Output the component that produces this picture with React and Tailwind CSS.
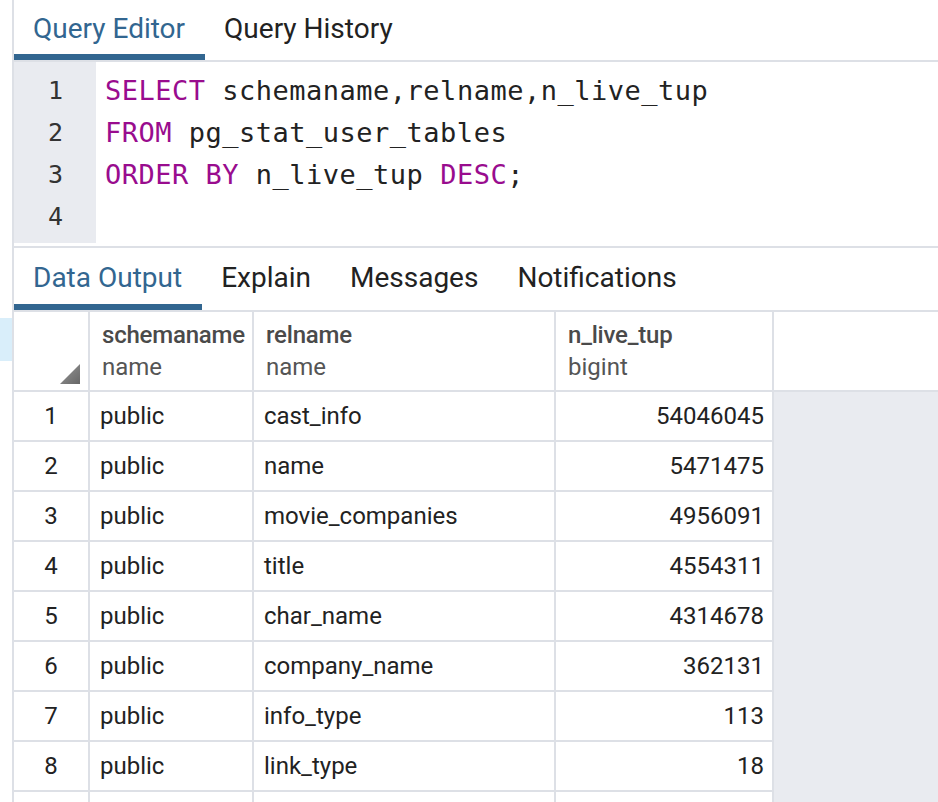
import React from 'react';

const rows = [
  ['public', 'cast_info', '54046045'],
  ['public', 'name', '5471475'],
  ['public', 'movie_companies', '4956091'],
  ['public', 'title', '4554311'],
  ['public', 'char_name', '4314678'],
  ['public', 'company_name', '362131'],
  ['public', 'info_type', '113'],
  ['public', 'link_type', '18'],
  ['', '', ''],
];

const codeLines = [
  [['k', 'SELECT'], ['t', ' schemaname,relname,n_live_tup']],
  [['k', 'FROM'], ['t', ' pg_stat_user_tables']],
  [['k', 'ORDER BY'], ['t', ' n_live_tup '], ['k', 'DESC'], ['t', ';']],
  [],
];

function Tab({ label, active }) {
  return (
    <div className="flex flex-col h-full">
      <div
        className={`flex-1 flex items-center pl-[19px] pr-[20px] pt-[4px] ${
          active ? 'text-[#326690]' : 'text-[#222]'
        }`}
      >
        {label}
      </div>
      <div className={`h-[6px] ${active ? 'bg-[#326690]' : ''}`} />
    </div>
  );
}

function App() {
  return (
    <div
      className="w-[938px] h-[802px] overflow-hidden bg-white flex"
      style={{ fontFamily: 'Roboto, "Noto Sans", sans-serif' }}
    >
      <div className="w-[12px] shrink-0">
        <div className="mt-[318px] h-[43px] bg-[#d9eefa]" />
      </div>

      <div className="flex-1 flex flex-col border-l-2 border-[#dde0e6] min-w-0">
        {/* query tabs */}
        <div className="h-[62px] shrink-0 flex border-b-2 border-[#dde0e6] text-[28px]">
          <Tab label="Query Editor" active />
          <Tab label="Query History" />
        </div>

        {/* editor */}
        <div className="h-[186px] shrink-0 flex border-b-2 border-[#dde0e6]">
          <div className="w-[82px] h-[181px] bg-[#e9ebf0] pt-[8px] pr-[33px] text-right text-[#333] text-[25px] font-['DejaVu_Sans_Mono',monospace]">
            {codeLines.map((_, i) => (
              <div key={i} className="h-[42px] leading-[42px]">
                {i + 1}
              </div>
            ))}
          </div>
          <div className="pl-[9px] pt-[8px] text-[27px] tracking-[0.5px] text-[#222] font-['DejaVu_Sans_Mono',monospace] whitespace-pre">
            {codeLines.map((line, i) => (
              <div key={i} className="h-[42px] leading-[42px]">
                {line.map(([kind, text], j) => (
                  <span key={j} className={kind === 'k' ? 'text-[#990c8e]' : ''}>
                    {text}
                  </span>
                ))}
              </div>
            ))}
          </div>
        </div>

        {/* output tabs */}
        <div className="h-[64px] shrink-0 flex border-b-2 border-[#dde0e6] text-[28px]">
          <Tab label="Data Output" active />
          <Tab label="Explain" />
          <Tab label="Messages" />
          <Tab label="Notifications" />
        </div>

        {/* result grid */}
        <div className="flex-1 flex flex-col text-[24px] text-[#222]">
          <div className="h-[80px] shrink-0 flex border-b-2 border-[#dde0e6]">
            <div className="w-[76px] border-r-2 border-[#dde0e6] flex items-end justify-end pr-[8px] pb-[6px]">
              <div className="w-[20px] h-[20px] bg-gradient-to-br from-[#9a9a9a] to-[#666] [clip-path:polygon(100%_0,100%_100%,0_100%)]" />
            </div>
            {[
              ['schemaname', 'name', 'w-[164px]'],
              ['relname', 'name', 'w-[302px]'],
              ['n_live_tup', 'bigint', 'w-[218px]'],
            ].map(([col, type, w]) => (
              <div
                key={col}
                className={`${w} border-r-2 border-[#dde0e6] flex flex-col justify-center pl-[12px] leading-[32px]`}
              >
                <div className="font-medium text-[#4a4a4a] tracking-[-0.2px]">{col}</div>
                <div className="text-[#555]">{type}</div>
              </div>
            ))}
            <div className="flex-1" />
          </div>

          <div className="flex-1 flex">
            <div className="flex flex-col">
              {rows.map((r, i) => (
                <div key={i} className="h-[50px] shrink-0 flex border-b-2 border-[#dde0e6]">
                  <div className="w-[76px] border-r-2 border-[#dde0e6] flex items-center justify-center">
                    {r[0] ? i + 1 : ''}
                  </div>
                  <div className="w-[164px] border-r-2 border-[#dde0e6] flex items-center px-[10px]">
                    {r[0]}
                  </div>
                  <div className="w-[302px] border-r-2 border-[#dde0e6] flex items-center px-[10px]">
                    {r[1]}
                  </div>
                  <div className="w-[218px] border-r-2 border-[#dde0e6] flex items-center justify-end pl-[10px] pr-[8px]">
                    {r[2]}
                  </div>
                </div>
              ))}
            </div>
            <div className="flex-1 bg-[#e9ebf0]" />
          </div>
        </div>
      </div>
    </div>
  );
}

export default App;
